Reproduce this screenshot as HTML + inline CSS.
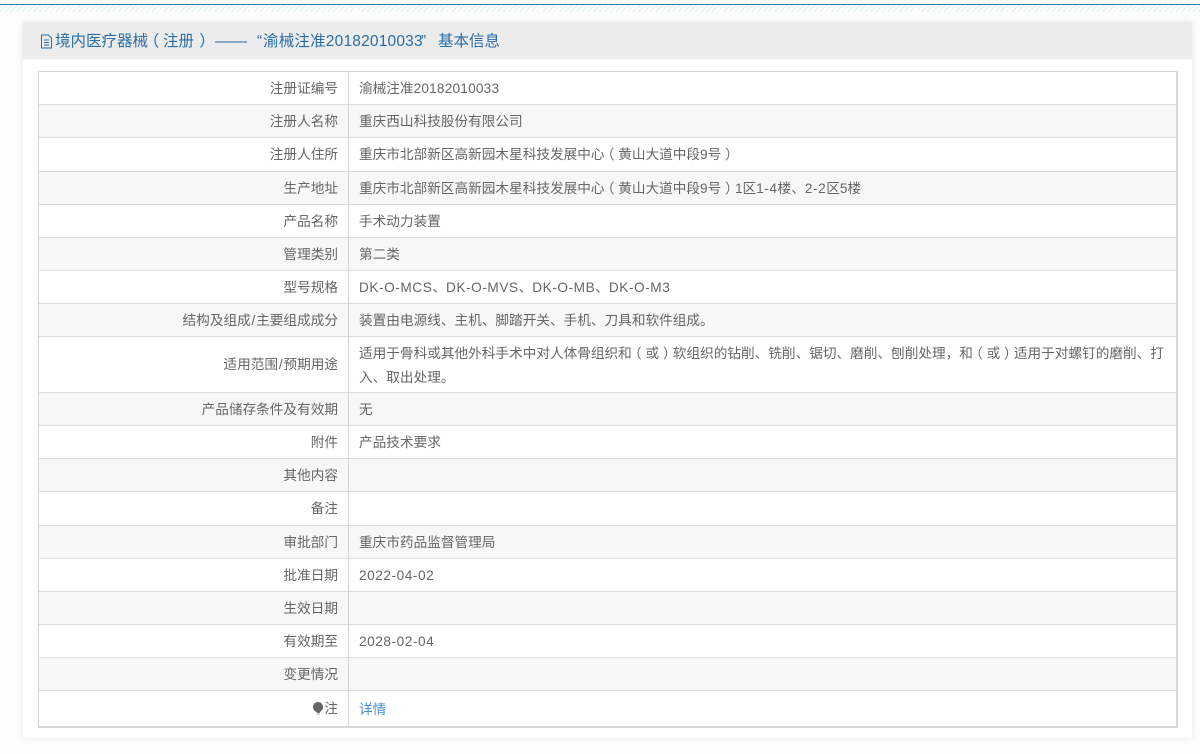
<!DOCTYPE html>
<html lang="zh"><head><meta charset="utf-8"><title>基本信息</title>
<style>
html,body{margin:0;padding:0;width:1200px;height:754px;overflow:hidden;background:#fdfdfd}
body{position:relative;font-family:"Liberation Sans","Noto Sans CJK SC",sans-serif;color:#666}
#wrap{position:absolute;left:0;top:0;width:1200px;height:754px;filter:blur(.35px)}
#topl{position:absolute;left:0;top:4px;width:1200px;height:1px;background:#2f7aa8}
#hatch{position:absolute;left:0;top:5px;width:1200px;height:7px;background:repeating-linear-gradient(135deg,#e3eff5 0 1px,#fff 1px 4px)}
#panel{position:absolute;left:23px;top:22px;width:1169px;height:716px;background:#fff;box-shadow:0 0 6px rgba(0,0,0,.1)}
#head{position:absolute;left:0;top:0;width:1169px;height:37px;background:#ececec}
#head span{position:absolute;top:0;line-height:40px;font-size:15.5px;color:#2a6ea8;white-space:nowrap}
.p{position:relative;left:-.28em}
.q{position:relative;left:.28em}
#head span.p{margin-left:-.28em;left:0}
#head span.q{margin-left:.28em;left:0}
#doc{position:absolute;left:17px;top:12px}
#tb{position:absolute;left:38px;top:71px;width:1137px;height:654px;border:1px solid #d4d4d4;border-bottom:2px solid #d8d8d8;border-right:2px solid #d8d8d8;background:#fff}
.r{position:absolute;left:0;width:1137px;border-bottom:1px solid #dcdcdc;box-sizing:border-box;font-size:13.65px;line-height:20px}
.r.g{background:#f7f7f7}
.k{position:absolute;right:838px;top:7px;white-space:nowrap;color:#666}
.v{position:absolute;left:320px;top:7px;width:806px;color:#666;white-space:nowrap}
.v.w{white-space:normal;line-height:24px;top:5px}
.l{letter-spacing:.55px}
.d{letter-spacing:.2px}
.s{padding:0 .8px}
#div{position:absolute;left:309px;top:0;width:1px;height:654px;background:#d4d4d4}
a{color:#4a90d0;text-decoration:none}
</style></head><body><div id="wrap">
<div id="topl"></div><div id="hatch"></div>
<div id="panel"><div id="head">
<svg id="doc" width="13" height="15" viewBox="0 0 13 15" fill="none" stroke="#2a6ea8" stroke-width="1"><path d="M1.5 1h7l3 3v10h-10zM4 6h5M4 8.5h5M4 11h5"/></svg>
<span style="left:32px">境内医疗器械</span><span class="p" style="left:125px">（</span><span style="left:140px">注册</span><span class="q" style="left:172px">）</span><span style="left:192px;width:32px;overflow:hidden;letter-spacing:0">————</span><span style="left:234px">“</span><span style="left:240px;letter-spacing:.2px">渝械注准20182010033</span><span style="left:398px">”</span><span style="left:415px">基本信息</span>
</div></div>
<div id="tb">
<div class="r" style="top:0;height:33px"><div class="k">注册证编号</div><div class="v">渝械注准<span class="d">20182010033</span></div></div>
<div class="r g" style="top:33px;height:33px"><div class="k">注册人名称</div><div class="v">重庆西山科技股份有限公司</div></div>
<div class="r" style="top:66px;height:34px"><div class="k">注册人住所</div><div class="v">重庆市北部新区高新园木星科技发展中心<span class="p">（</span>黄山大道中段9号<span class="q">）</span></div></div>
<div class="r g" style="top:100px;height:33px"><div class="k">生产地址</div><div class="v">重庆市北部新区高新园木星科技发展中心<span class="p">（</span>黄山大道中段9号<span class="q">）</span>1区<span class="l">1-4</span>楼、<span class="l">2-2</span>区5楼</div></div>
<div class="r" style="top:133px;height:33px"><div class="k">产品名称</div><div class="v">手术动力装置</div></div>
<div class="r g" style="top:166px;height:33px"><div class="k">管理类别</div><div class="v">第二类</div></div>
<div class="r" style="top:199px;height:33px"><div class="k">型号规格</div><div class="v"><span class="l">DK-O-MCS</span>、<span class="l">DK-O-MVS</span>、<span class="l">DK-O-MB</span>、<span class="l">DK-O-M3</span></div></div>
<div class="r g" style="top:232px;height:33px"><div class="k">结构及组成<span class="s">/</span>主要组成成分</div><div class="v">装置由电源线、主机、脚踏开关、手机、刀具和软件组成。</div></div>
<div class="r" style="top:265px;height:56px"><div class="k" style="top:18px">适用范围<span class="s">/</span>预期用途</div><div class="v w">适用于骨科或其他外科手术中对人体骨组织和<span class="p">（</span>或<span class="q">）</span>软组织的钻削、铣削、锯切、磨削、刨削处理，和<span class="p">（</span>或<span class="q">）</span>适用于对螺钉的磨削、打入、取出处理。</div></div>
<div class="r g" style="top:321px;height:33px"><div class="k">产品储存条件及有效期</div><div class="v">无</div></div>
<div class="r" style="top:354px;height:33px"><div class="k">附件</div><div class="v">产品技术要求</div></div>
<div class="r g" style="top:387px;height:33px"><div class="k">其他内容</div></div>
<div class="r" style="top:420px;height:34px"><div class="k">备注</div></div>
<div class="r g" style="top:454px;height:33px"><div class="k">审批部门</div><div class="v">重庆市药品监督管理局</div></div>
<div class="r" style="top:487px;height:33px"><div class="k">批准日期</div><div class="v"><span class="l">2022-04-02</span></div></div>
<div class="r g" style="top:520px;height:33px"><div class="k">生效日期</div></div>
<div class="r" style="top:553px;height:33px"><div class="k">有效期至</div><div class="v"><span class="l">2028-02-04</span></div></div>
<div class="r g" style="top:586px;height:33px"><div class="k">变更情况</div></div>
<div class="r" style="top:619px;height:35px;border-bottom:0"><div class="k" style="top:8px"><svg width="12" height="14" viewBox="0 0 12 14" style="vertical-align:-2px"><path d="M6 1a5 5 0 0 1 3 9L7.5 12H5.5L3 10A5 5 0 0 1 6 1z" fill="#666"/><path d="M5 13h2.5" stroke="#888"/></svg>注</div><div class="v" style="top:9px"><a>详情</a></div></div>
<div id="div"></div>
</div>
</div></body></html>
